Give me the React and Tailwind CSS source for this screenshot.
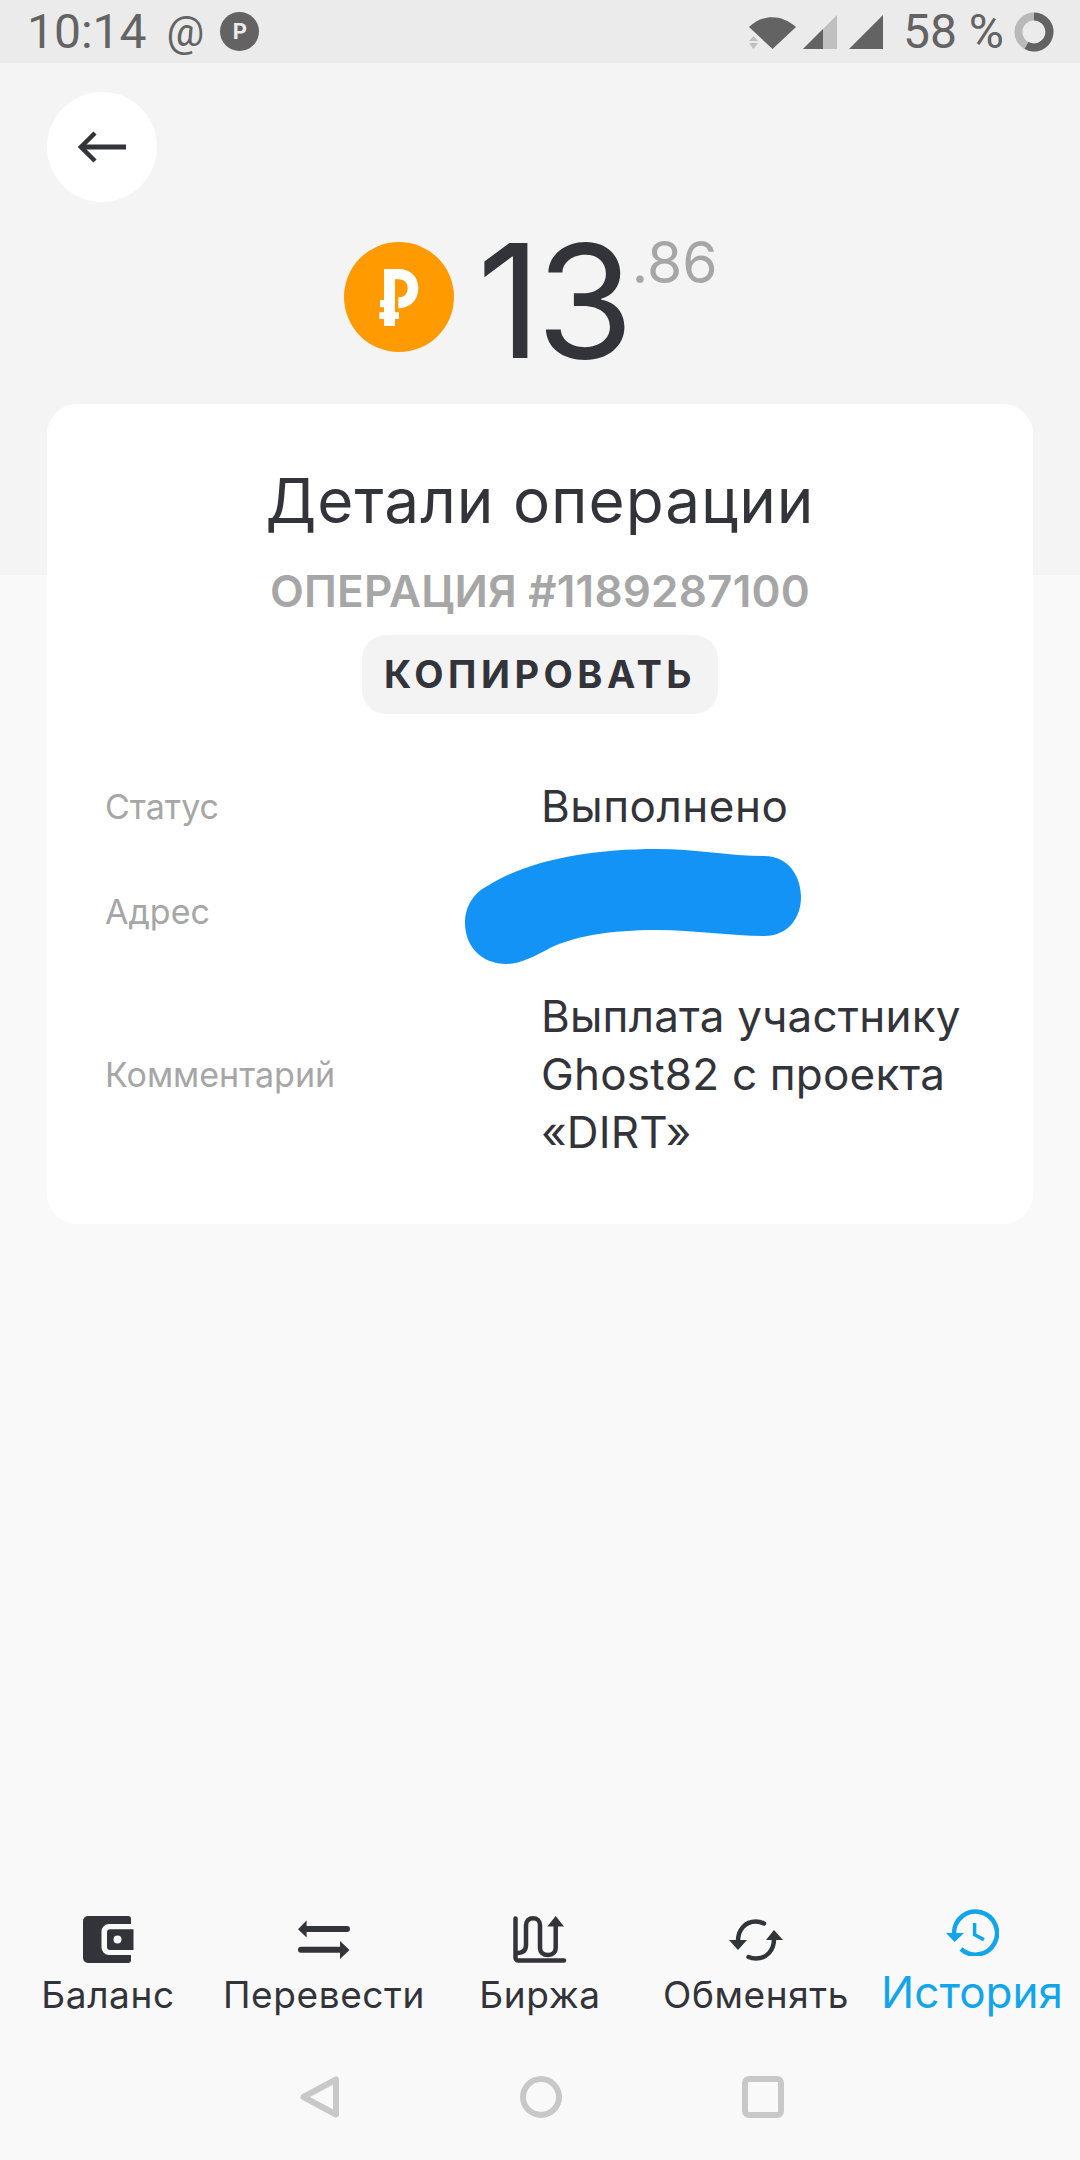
const FONT = "font-['Inter','Liberation_Sans',sans-serif]";

function WalletIcon() {
  return (
    <svg width="51" height="47" viewBox="0 0 51 47" fill="#33333a">
      <path d="M5 0H45a3 3 0 0 1 3 3V8H26a7.500 7.500 0 0 0-7.500 7.500V31.500a7.500 7.500 0 0 0 7.500 7.500H48V44a3 3 0 0 1-3 3H5a5 5 0 0 1-5-5V5a5 5 0 0 1 5-5z" />
      <path fillRule="evenodd" d="M27 13.300H50.500V34H27a3 3 0 0 1-3-3V16.300a3 3 0 0 1 3-3zM34.500 19.500a4 4 0 1 0 0 8 4 4 0 0 0 0-8z" />
    </svg>
  );
}

function TransferIcon() {
  return (
    <svg width="52" height="39" viewBox="0 0 52 39" fill="#33333a">
      <path d="M0 9.300L8.600 .5V6H49a3 3 0 0 1 0 6H8.600V17.500z" />
      <path d="M51.500 30L42 21V26.700H3a3 3 0 0 0 0 6H42V39z" />
    </svg>
  );
}

function ExchangeChartIcon() {
  return (
    <svg width="54" height="47" viewBox="0 0 54 47" fill="none" stroke="#33333a" strokeWidth="4.500">
      <path d="M2.500 2.500V41a3 3 0 0 0 3 3.500H51" strokeLinecap="round" />
      <path d="M4 37C10 37 13 34 13 29V9C13 5 16 2.300 20 2.300S27 5 27 9V32C27 36 30 39 35 39S42.700 36 42.700 32V9" />
      <path d="M34.300 10.500L42.700 0L51 10.500z" fill="#33333a" stroke="none" />
    </svg>
  );
}

function ExchangeIcon() {
  return (
    <svg width="54" height="42" viewBox="0 0 54 42" fill="none" stroke="#33333a" strokeWidth="4.500" strokeLinecap="round">
      <path d="M35 4.500C32 3 29.500 2.500 27 2.500C16 2.500 9 11 9 22" />
      <path d="M45 20C45 31 38 39.500 27 39.500C24.500 39.500 22 39 19.500 38" />
      <path d="M0 21H18L9 31z" fill="#33333a" stroke="none" />
      <path d="M37 21H54L45 11z" fill="#33333a" stroke="none" />
    </svg>
  );
}

function HistoryIcon() {
  return (
    <svg width="53" height="47" viewBox="0 0 53 47" fill="none" stroke="#12a5ec" strokeWidth="4.500">
      <path d="M8 24A21.500 21.500 0 1 1 15 40" />
      <path d="M28.600 14V25.700L38 30.600" strokeWidth="3.500" />
      <path d="M0 24H18L8.600 33z" fill="#12a5ec" stroke="none" />
    </svg>
  );
}

const tabs = [
  { label: "Баланс", icon: WalletIcon },
  { label: "Перевести", icon: TransferIcon },
  { label: "Биржа", icon: ExchangeChartIcon },
  { label: "Обменять", icon: ExchangeIcon },
];

export default function App() {
  return (
    <div className={`${FONT} w-[1080px] h-[2160px] bg-[#f9f9f9] flex flex-col text-[#33333a]`}>
      {/* status bar */}
      <div className="h-[63px] shrink-0 bg-[#ebebeb] flex items-center justify-between pl-[27px] pr-[26px] text-[#636363] font-['Roboto',sans-serif] text-[48px] leading-[63px]">
        <div className="flex items-center">
          <span>10:14</span>
          <span className="ml-[20px] text-[42px]">@</span>
          <span className="ml-[16px] w-[39px] h-[39px] rounded-full bg-[#636363] text-[#ebebeb] flex items-center justify-center text-[22px] leading-none font-bold">P</span>
        </div>
        <div className="flex items-center">
          <svg width="134" height="34" viewBox="0 0 134 34" fill="#636363">
            <path d="M0 12C14-1 32-1 47 12L23.500 34z" />
            <path d="M4.500 21L9 26H0zM4.500 34L9 28H0z" fill="#c0c0c0" />
            <path d="M54 34L88 0V34z" fill="#c0c0c0" />
            <path d="M54 34L74 14V34z" />
            <path d="M100 34L134 0V34z" />
          </svg>
          <span className="ml-[20px]">58 %</span>
          <svg className="ml-[10px]" width="40" height="40" viewBox="0 0 40 40" fill="none" strokeWidth="8">
            <circle cx="20" cy="20" r="15.500" stroke="#b9b9b9" />
            <path d="M20 4.500A15.500 15.500 0 1 1 12.500 33.600" stroke="#636363" />
          </svg>
        </div>
      </div>

      <div className="relative flex-1 flex flex-col">
        {/* grey band behind the top of the card */}
        <div className="absolute inset-x-0 top-0 h-[512px] bg-[#f4f4f4]" />

        <div className="relative flex flex-col flex-1">
          <div className="pl-[47px] pt-[29px]">
            <div className="w-[110px] h-[110px] rounded-full bg-white flex items-center justify-center">
              <svg width="48" height="32" viewBox="0 0 48 32" fill="none" stroke="#33333a">
                <path d="M17 2L3 16L17 30" strokeWidth="4.500" />
                <path d="M5 16H48" strokeWidth="5" />
              </svg>
            </div>
          </div>

          {/* amount */}
          <div className="mt-[26px] h-[145px] flex items-start pl-[344px]">
            <div className="mt-[14px] w-[110px] h-[110px] rounded-full bg-[#ff9a00] flex items-center justify-center">
              <svg width="40" height="57" viewBox="0 0 118 171" fill="#fff">
                <path d="M14 0H58C95 0 117 24 117 58C117 94 92 118 57 118V85C75 85 85 75 85 58C85 42 75 31 58 31H47V171H14z" />
                <path d="M2 93H47V115H2zM0 130H59V150H0z" />
              </svg>
            </div>
            <span className="ml-[23px] text-[158px] leading-[145px] font-normal tracking-[-5px]">13</span>
            <span className="ml-[3px] text-[57px] leading-[70px] font-normal text-[#a6a6a6]">.86</span>
          </div>

          {/* card */}
          <div className="mx-[47px] mt-[31px] pt-[62px] pb-[63px] bg-white rounded-[30px] flex flex-col items-center">
            <h1 className="text-[62px] leading-[70px] font-normal tracking-[1px]">Детали операции</h1>
            <div className="mt-[29px] text-[44px] leading-[52px] font-semibold text-[#a6a6a6] tracking-[0.2px]">ОПЕРАЦИЯ #1189287100</div>
            <button className="mt-[18px] w-[356px] h-[79px] rounded-[24px] bg-[#f3f3f3] text-[38px] font-bold tracking-[4.5px]">КОПИРОВАТЬ</button>

            <div className="w-full mt-[63px] pl-[58px] flex flex-col gap-[47px]">
              <div className="flex items-center h-[58px]">
                <div className="w-[436px] text-[34px] text-[#a6a6a6]">Статус</div>
                <div className="text-[44px] tracking-[0.5px]">Выполнено</div>
              </div>
              <div className="flex items-center h-[58px]">
                <div className="w-[436px] text-[34px] text-[#a6a6a6]">Адрес</div>
              </div>
              <div className="flex items-center">
                <div className="w-[436px] text-[34px] text-[#a6a6a6]">Комментарий</div>
                <div className="text-[44px] tracking-[0.2px] leading-[58px] w-[470px]">Выплата участнику Ghost82 с проекта «DIRT»</div>
              </div>
            </div>
          </div>

          {/* bottom tabs */}
          <div className="mt-auto grid grid-cols-5 items-end">
            {tabs.map((t) => {
              const Icon = t.icon;
              return (
                <div key={t.label} className="flex flex-col items-center">
                  <div className="h-[47px] flex items-center justify-center"><Icon /></div>
                  <span className="mt-[10px] text-[37px] leading-[44px] tracking-[0.6px]">{t.label}</span>
                </div>
              );
            })}
            <div className="flex flex-col items-center text-[#12a5ec]">
              <HistoryIcon />
              <span className="mt-[11px] text-[44px] leading-[50px]">История</span>
            </div>
          </div>

          {/* android nav */}
          <div className="pt-[59px] pb-[42px] pl-[3px] flex justify-center gap-[180px]">
            <svg width="40" height="42" viewBox="0 0 40 42" fill="none" stroke="#c8c8c8" strokeWidth="6" strokeLinejoin="round">
              <path d="M36 3.500V38.500L3.500 21z" />
            </svg>
            <div className="w-[42px] h-[42px] rounded-full border-[6px] border-[#c8c8c8]" />
            <div className="w-[42px] h-[42px] rounded-[7px] border-[6px] border-[#c8c8c8]" />
          </div>
        </div>

        {/* redaction scribble over the address */}
        <svg className="absolute left-[460px] top-[777px]" width="350" height="130" viewBox="0 0 350 130">
          <path d="M29 45C70 20 130 9 197 9C235 9 270 16 304 16C330 16 341 38 341 57C341 78 328 96 304 96C270 96 235 90 197 90C150 90 115 96 90 108C75 116 60 124 47 124C20 124 5 105 5 83C5 65 15 52 29 45Z" fill="#1393f5" />
        </svg>
      </div>
    </div>
  );
}
